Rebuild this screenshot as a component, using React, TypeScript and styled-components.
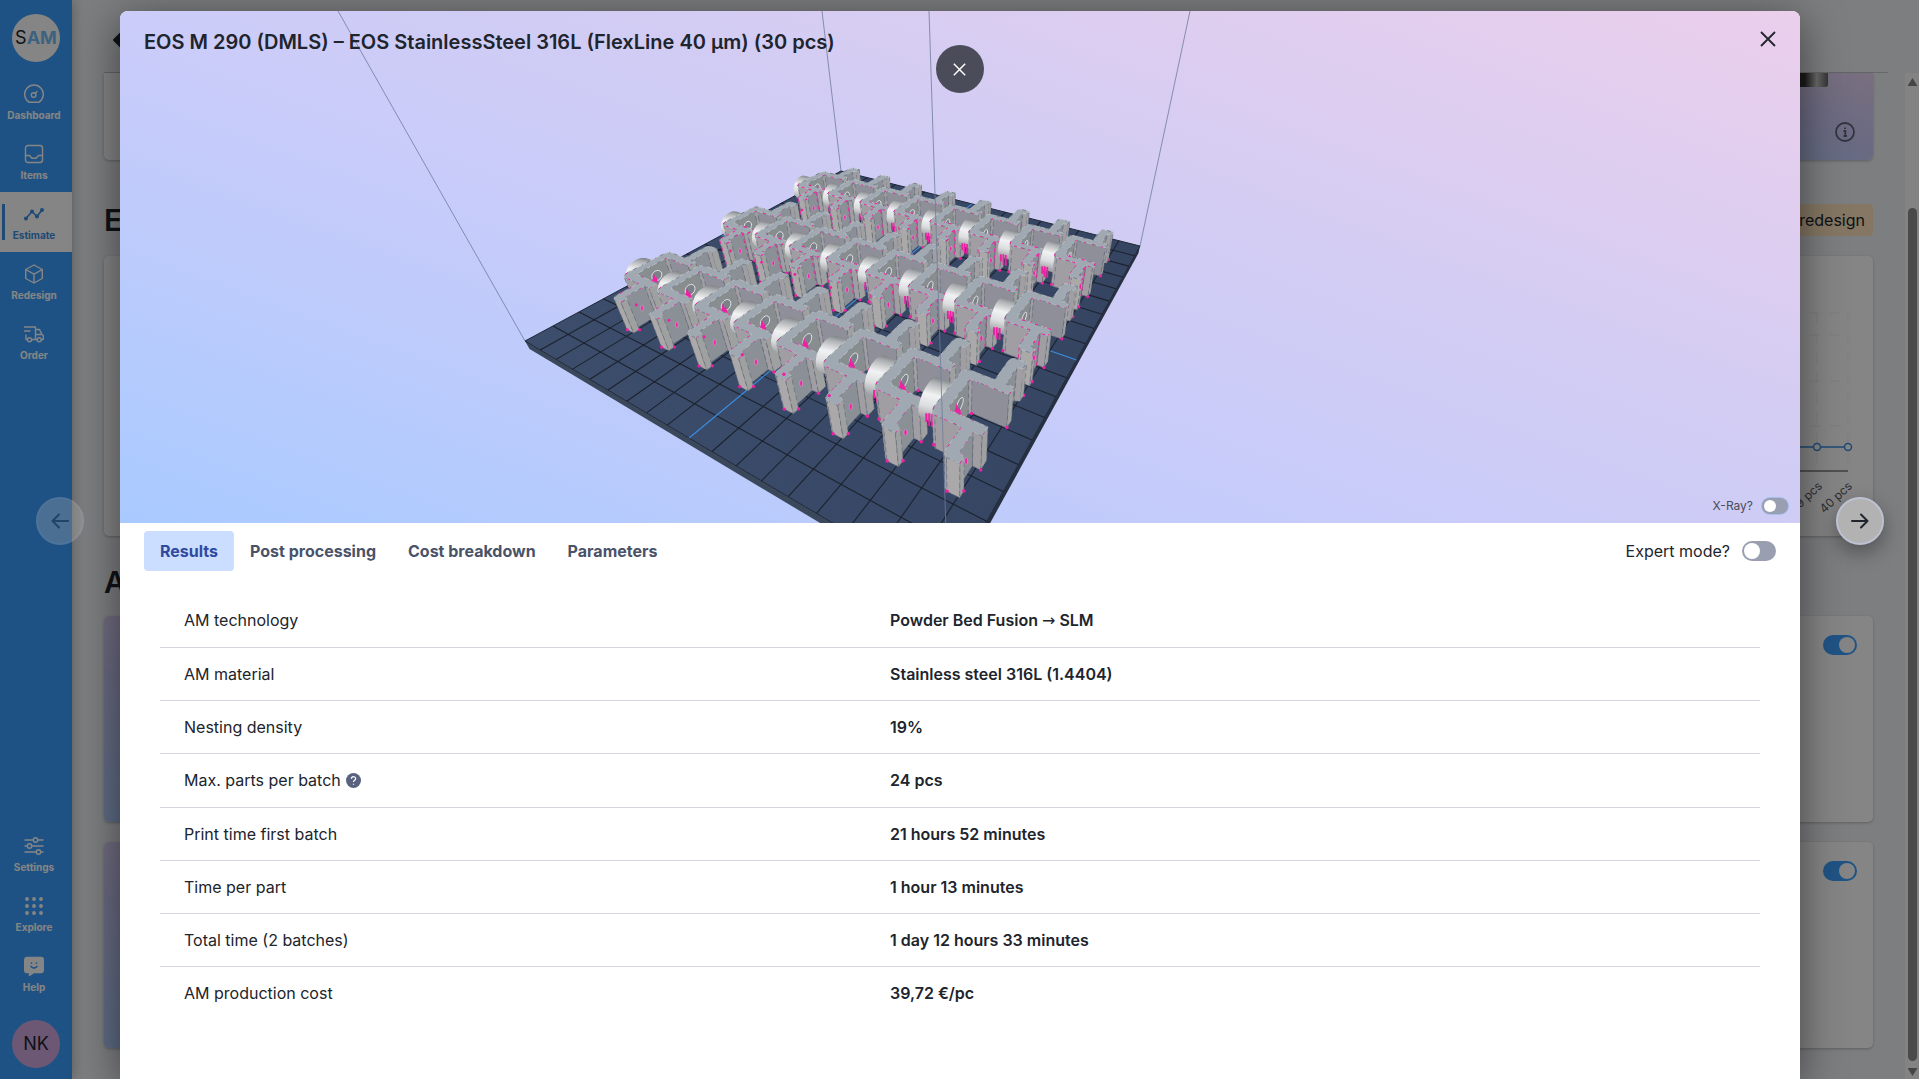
import React from "react";
import styled, { createGlobalStyle, css } from "styled-components";

type Pt = [number, number];
type Vec = [number, number, number];

const GlobalStyle = createGlobalStyle`
  *, *::before, *::after { box-sizing: border-box; }
  body {
    margin: 0;
    overflow: hidden;
    font-family: Inter, Roboto, "Liberation Sans", sans-serif;
    font-size: 16px;
    line-height: 20px;
    color: #20242c;
  }
  button { font: inherit; color: inherit; border: 0; padding: 0; background: none; cursor: pointer; }
  a { color: inherit; text-decoration: none; }
  h1, h2 { margin: 0; }
`;

/* ---------- Page behind the dialog ---------- */

const Page = styled.div`
  position: relative;
  display: flex;
  height: 100vh;
  background: #f0f2f5;
`;

const Sidebar = styled.nav`
  display: flex;
  flex-direction: column;
  width: 72px;
  padding: 14px 0 11px;
  background: #3c9efe;
  color: #fff;
  box-shadow: 0 0 12px rgba(0, 0, 0, 0.3);
`;

const Round = styled.div<{ $bg: string }>`
  display: flex;
  align-items: center;
  justify-content: center;
  width: 48px;
  height: 48px;
  margin: 0 auto;
  border-radius: 50%;
  background: ${(p) => p.$bg};
  color: #20242c;
  font-size: 18px;
`;

const LogoAccent = styled.b`
  color: #76bdf5;
`;

const NavGroup = styled.div<{ $push?: boolean }>`
  display: flex;
  flex-direction: column;
  margin-top: ${(p) => (p.$push ? "auto" : "10px")};
  margin-bottom: ${(p) => (p.$push ? "16px" : "0")};
`;

const NavItem = styled.a<{ $active?: boolean }>`
  position: relative;
  display: flex;
  flex-direction: column;
  align-items: center;
  gap: 5px;
  height: 60px;
  padding: 12px 4px 0 0;
  font-size: 10px;
  line-height: 12px;
  font-weight: 700;
  ${(p) =>
    p.$active &&
    css`
      background: #fff;
      color: #3b8ee0;
      &::before {
        content: "";
        position: absolute;
        left: 2px;
        top: 12px;
        width: 3px;
        height: 36px;
        background: #3b8ee0;
      }
    `}
`;

const Main = styled.main`
  flex: 1;
  min-width: 0;
  padding-left: 32px;
`;

const PageHeader = styled.header`
  height: 73px;
  margin-right: 31px;
  padding: 28px 0 0 6px;
  border-bottom: 1px solid #c5c8cc;
`;

const ScrollRow = styled.div`
  display: flex;
  justify-content: space-between;
  height: calc(100vh - 73px);
`;

const Column = styled.div`
  flex: 1;
  margin-right: 32px;
`;

const Card = styled.section<{ $height: number; $gap?: number; $flat?: boolean }>`
  display: flex;
  justify-content: space-between;
  align-items: flex-start;
  height: ${(p) => p.$height}px;
  margin-bottom: ${(p) => p.$gap ?? 20}px;
  border-radius: ${(p) => (p.$flat ? "0 0 5px 5px" : "5px")};
  background: #fff;
  overflow: hidden;
  box-shadow: 0 1px 3px rgba(0, 0, 0, 0.25);
`;

const Tinted = styled.div`
  display: flex;
  align-items: flex-end;
  justify-content: flex-end;
  width: 200px;
  height: 100%;
  padding: 0 17px 17px;
  background: linear-gradient(20deg, #b5d0ff, #ccccfa 55%, #e9d5f4);
`;

const CardSwitch = styled.div`
  padding: 19px 16px;
`;

const SectionBar = styled.div<{ $gap: number; $height: number }>`
  display: flex;
  align-items: center;
  justify-content: space-between;
  height: ${(p) => p.$height}px;
  margin-bottom: ${(p) => p.$gap}px;
`;

const SectionTitle = styled.h2`
  font-size: 30px;
  line-height: 36px;
  font-weight: 600;
`;

const Badge = styled.span`
  padding: 6px 8px;
  border-radius: 4px;
  background: #ffe4bf;
`;

const ScrollTrack = styled.div`
  display: flex;
  flex-direction: column;
  align-items: center;
  width: 14px;
  padding: 5px 0 3px 1px;
  background: #fcfcfc;
`;

const ScrollThumb = styled.div`
  flex: 1;
  width: 9px;
  margin: 122px 0 7px;
  border-radius: 5px;
  background: #8e8e8e;
`;

const ScrollArrow = styled.span<{ $down?: boolean }>`
  width: 10px;
  height: 8px;
  background: #858585;
  clip-path: ${(p) => (p.$down ? "polygon(0 0, 100% 0, 50% 100%)" : "polygon(50% 0, 100% 100%, 0 100%)")};
`;

const Backdrop = styled.div`
  position: absolute;
  inset: 0;
  display: flex;
  padding: 11px 119px 0 120px;
  background: rgba(0, 0, 0, 0.48);
`;

/* ---------- Dialog ---------- */

const Dialog = styled.section`
  display: flex;
  flex-direction: column;
  flex: 1;
  min-width: 0;
  border-radius: 8px 8px 0 0;
  background: #fff;
  overflow: hidden;
  box-shadow: 0 8px 44px rgba(0, 0, 0, 0.5);
`;

const Viewer = styled.div`
  position: relative;
  height: 512px;
  background: linear-gradient(20deg, #a9caff 0%, #cbccf9 45%, #d0ccf4 58%, #ebcfec 100%);
`;

const SceneSvg = styled.svg`
  display: block;
  width: 100%;
  height: 100%;
`;

const ViewerHead = styled.header`
  position: absolute;
  inset: 0 0 auto;
  display: flex;
  align-items: center;
  justify-content: space-between;
  padding: 16px 24px;
`;

const DialogTitle = styled.h1`
  font-size: 20px;
  line-height: 30px;
  font-weight: 600;
`;

const CloseButton = styled.button`
  display: flex;
  width: 16px;
  height: 30px;
  padding-bottom: 6px;
  align-items: center;
`;

const XRay = styled.label`
  position: absolute;
  right: 12px;
  bottom: 8px;
  display: flex;
  align-items: center;
  gap: 9px;
  font-size: 12px;
  line-height: 18px;
  color: #4a4d59;
`;

const Switch = styled.input<{ $small?: boolean }>`
  appearance: none;
  display: block;
  flex: none;
  width: ${(p) => (p.$small ? 26 : 34)}px;
  height: ${(p) => (p.$small ? 16 : 20)}px;
  margin: 0;
  padding: 2px;
  border-radius: 10px;
  background: #999eb1;
  box-shadow: ${(p) => (p.$small ? "0 0 0 1px #a5bfec" : "none")};
  &::before {
    content: "";
    display: block;
    width: ${(p) => (p.$small ? 12 : 16)}px;
    height: ${(p) => (p.$small ? 12 : 16)}px;
    border-radius: 50%;
    background: #fff;
  }
  &:checked { background: #3ea0ff; }
  &:checked::before { margin-left: auto; }
`;

const TabBar = styled.div`
  display: flex;
  align-items: center;
  justify-content: space-between;
  padding: 8px 24px 0;
`;

const Tabs = styled.div`
  display: flex;
`;

const Tab = styled.button<{ $active?: boolean }>`
  height: 40px;
  padding: 0 16px;
  border-radius: 4px;
  font-weight: 700;
  background: ${(p) => (p.$active ? "#cbdeff" : "transparent")};
  color: ${(p) => (p.$active ? "#3049a0" : "#4a5268")};
`;

const ExpertMode = styled.label`
  display: flex;
  align-items: center;
  gap: 12px;
`;

const TableWrap = styled.div`
  padding: 23px 40px 0;
`;

const Table = styled.table`
  width: 100%;
  border-collapse: collapse;
  table-layout: fixed;
`;

const LabelCell = styled.th`
  width: 706px;
  height: 53px;
  padding: 0 24px;
  text-align: left;
  font-weight: 400;
`;

const ValueCell = styled.td`
  padding: 0 24px;
  font-weight: 600;
`;

const ThinArrow = styled.span`
  font-family: "DejaVu Sans", sans-serif;
  font-weight: 400;
`;

const Row = styled.tr<{ $tall?: boolean }>`
  height: ${(p) => (p.$tall ? 54 : 53)}px;
  & + & { border-top: 1px solid #d4d6de; }
`;

const LabelLine = styled.span`
  display: flex;
  align-items: center;
  gap: 5px;
`;

/* ---------- Floating controls ---------- */

const FloatButton = styled.button<{ $side: "left" | "right" | "center" }>`
  position: absolute;
  display: flex;
  align-items: center;
  justify-content: center;
  width: 48px;
  height: 48px;
  border-radius: 50%;
  ${(p) =>
    p.$side === "center"
      ? css`
          top: 45px;
          left: calc(50% - 24px);
          background: #4a4d59;
          color: #fff;
        `
      : css`
          top: 497px;
          ${p.$side}: ${p.$side === "left" ? 36 : 35}px;
          background: #b2b2b2;
          border: 2px solid #bdc2d3;
          box-shadow: ${p.$side === "left" ? "none" : "0 8px 20px rgba(0, 0, 0, 0.35)"};
          opacity: ${p.$side === "left" ? 0.3 : 1};
        `}
`;

/* ---------- Build plate scene ---------- */

// Homogeneous camera columns: origin, plate u axis, plate v axis, height axis.
const O: Vec = [525, 341, 1];
const AU: Vec = [76, 33.7, -0.366];
const AV: Vec = [862.4, -58.9, 0.6497];
const AZ: Vec = [-468, -539.4, -0.489];
const CAM: Pt = [1.189, -0.312];

const project = (u: number, v: number, z: number): Pt => {
  const c = [0, 1, 2].map((i) => O[i] + AU[i] * u + AV[i] * v + AZ[i] * z);
  return [c[0] / c[2], c[1] / c[2]];
};
const fmt = (pts: Pt[]) => pts.map((p) => `${p[0].toFixed(1)},${p[1].toFixed(1)}`).join(" ");
const H = 0.08;

// Plan outline of the bracket, relative to the centre of its web.
const OUTLINE: Pt[] = [
  [0, -0.046], [0.003, -0.056], [0.01, -0.061], [0.058, -0.061], [0.058, -0.108], [0.06, -0.116], [0.066, -0.12],
  [0.088, -0.12], [0.088, -0.107], [0.078, -0.103], [0.078, -0.061], [0.093, -0.061], [0.093, -0.041], [0.026, -0.041],
  [0.021, -0.036], [0.021, 0.03], [0.025, 0.035], [0.093, 0.035], [0.093, 0.054], [0.078, 0.054], [0.078, 0.098],
  [0.088, 0.102], [0.088, 0.118], [0.066, 0.118], [0.06, 0.114], [0.058, 0.105], [0.058, 0.054], [0.01, 0.054],
  [0.003, 0.05], [0, 0.042],
];
const WEB_FACE = 14;
const BACK_FACE = 16;

const PINK = "#f01fa5";

const convexHull = (input: Pt[]): Pt[] => {
  const pts = [...input].sort((a, b) => a[0] - b[0] || a[1] - b[1]);
  const cross = (o: Pt, a: Pt, b: Pt) => (a[0] - o[0]) * (b[1] - o[1]) - (a[1] - o[1]) * (b[0] - o[0]);
  const half = (list: Pt[]) => {
    const out: Pt[] = [];
    list.forEach((p) => {
      while (out.length > 1 && cross(out[out.length - 2], out[out.length - 1], p) <= 0) out.pop();
      out.push(p);
    });
    return out.slice(0, -1);
  };
  return [...half(pts), ...half([...pts].reverse())];
};

const ring = (u: number, v: number, z: number, r: number): Pt[] =>
  Array.from({ length: 20 }, (_, i) => {
    const a = (i / 20) * Math.PI * 2;
    return project(u, v + Math.cos(a) * r, z + Math.sin(a) * r);
  });

function Bracket({ u, v }: { u: number; v: number }) {
  const front = v < 0.3;
  const plan = OUTLINE.map(([a, b]): Pt => [u + a, v + b]);
  const sides = plan
    .map((a, i) => {
      const b = plan[(i + 1) % plan.length];
      const n: Pt = [b[1] - a[1], a[0] - b[0]];
      const m: Pt = [(a[0] + b[0]) / 2, (a[1] + b[1]) / 2];
      const facing = n[0] * (CAM[0] - m[0]) + n[1] * (CAM[1] - m[1]) > 0;
      const dist = Math.hypot(CAM[0] - m[0], CAM[1] - m[1]);
      const len = Math.hypot(n[0], n[1]);
      return { i, a, b, facing, dist, len, slope: n[0] / len };
    })
    .filter((s) => s.facing)
    .sort((p, q) => q.dist - p.dist);
  const top = plan.map((p) => project(p[0], p[1], H));
  const boss = convexHull([...ring(u - 0.036, v - 0.003, 0.042, 0.036), ...ring(u, v - 0.003, 0.042, 0.036)]);
  const hole = ring(u + 0.021, v, 0.052, 0.012);
  const [hx, hy] = project(u + 0.021, v - 0.008, 0.044);
  const s = (project(u, v, 0)[1] - project(u, v, H)[1]) / 34;
  const [bx, by] = project(u - 0.031, v - 0.018, 0);
  const [fx, fy] = project(u + 0.078, v - 0.082, 0.036);
  const feet: Pt[] = [[0.066, -0.12], [0.088, -0.107], [0.093, -0.061], [0.003, -0.056], [0.026, 0.034], [0.093, 0.036], [0.088, 0.118]];
  const dots = feet.map(([a, b]) => project(u + a, v + b, 0));
  const shade = (f: { i: number; slope: number; len: number }) => {
    if (f.i === WEB_FACE) return "#888d90";
    if (f.i === BACK_FACE) return "#8f8f99";
    if (f.len > 0.035 && f.slope > 0.9) return "#8b9096";
    if (f.slope > 0.9) return "#9fa1a1";
    return f.i === 6 ? "#aba8a9" : "#a09ea3";
  };
  const dot = (i: number) => <circle cx={dots[i][0]} cy={dots[i][1]} r={1.8 * s} fill={PINK} />;
  const spike: Pt[] = [[-6, 6], [-4, 0], [-3, 1], [-1, -8], [1, -2], [2, -4], [4, 3], [2, 8]];
  const spikeScale = front ? s : s * 0.45;
  return (
    <g>
      <polygon points={fmt(boss)} fill="url(#boss)" />
      <path
        d={`M${bx - 2 * s} ${by - 8 * s}v${9 * s}M${bx + 1 * s} ${by - 8 * s}v${13 * s}M${bx + 4 * s} ${by - 7 * s}v${13 * s}`}
        stroke={PINK}
        strokeWidth={2.2 * s}
      />
      {dot(6)}
      {sides.map((f) => (
        <React.Fragment key={f.i}>
          <polygon
            points={fmt([project(f.a[0], f.a[1], 0), project(f.b[0], f.b[1], 0), project(f.b[0], f.b[1], H), project(f.a[0], f.a[1], H)])}
            fill={shade(f)}
            stroke={f.len > 0.012 ? "#5f6875" : shade(f)}
            strokeWidth={0.6}
            strokeDasharray="5 3"
          />
          {f.i === WEB_FACE && (
            <g>
              <polygon points={fmt(hole)} fill="#7c8088" stroke="#e2e4e6" strokeWidth={1} />
              <polygon points={fmt(spike.map(([x, y]): Pt => [hx + x * spikeScale, hy + y * spikeScale]))} fill={PINK} />
              {dot(4)}
              {dot(5)}
            </g>
          )}
        </React.Fragment>
      ))}
      <ellipse cx={fx} cy={fy} rx={1.6 * s} ry={3.4 * s} fill={PINK} stroke="#c9c3cb" strokeWidth={0.5} />
      <polygon points={fmt(top)} fill="#a0a8b1" stroke="#bfc4c9" strokeWidth={0.7} strokeLinejoin="round" />
      <polygon points={fmt(top)} fill="none" stroke="#5f6978" strokeWidth={0.7} strokeDasharray="4 4 1 6" />
      <polyline points={fmt(top.slice(7, 14))} fill="none" stroke={PINK} strokeWidth={front ? 0.8 : 1.1} strokeDasharray={front ? "3 9 1 12" : "3 4 1 6"} />
      <polyline points={fmt(top.slice(0, 5))} fill="none" stroke={PINK} strokeWidth={0.9} strokeDasharray={front ? "3 7" : "3 4"} />
      <polyline points={fmt(top.slice(15, 19))} fill="none" stroke={PINK} strokeWidth={0.9} strokeDasharray="2 7" />
      {!front && (
        <path
          d={`M${project(u + 0.078, v - 0.064, H).join(" ")}L${project(u + 0.078, v - 0.064, 0).join(" ")}M${project(u + 0.06, v - 0.116, H).join(" ")}L${project(u + 0.06, v - 0.116, 0.01).join(" ")}`}
          stroke={PINK}
          strokeWidth={0.9}
          strokeDasharray="4 3"
        />
      )}
      {dot(0)}
      {dot(1)}
      {dot(2)}
      {dot(3)}
    </g>
  );
}

function Scene() {
  const cells = Array.from({ length: 17 }, (_, i) => i + 1);
  const seg = (a: Pt, b: Pt) => `M${a[0].toFixed(1)} ${a[1].toFixed(1)}L${b[0].toFixed(1)} ${b[1].toFixed(1)}`;
  const T = -0.022;
  return (
    <SceneSvg viewBox="120 11 1680 512" preserveAspectRatio="xMidYMin slice" role="img" aria-label="Build plate preview">
      <defs>
        <linearGradient id="boss" x1="0.6" y1="0" x2="0.4" y2="1">
          <stop offset="0" stopColor="#75787c" />
          <stop offset="0.14" stopColor="#aeb1b4" />
          <stop offset="0.4" stopColor="#f1f2f3" />
          <stop offset="0.65" stopColor="#dcdddf" />
          <stop offset="1" stopColor="#8c9093" />
        </linearGradient>
        <linearGradient id="plate" x1="0" y1="0" x2="1" y2="0">
          <stop offset="0" stopColor="#3d4e6d" />
          <stop offset="1" stopColor="#344461" />
        </linearGradient>
      </defs>
      <path d="M338 11L525 341M822 11L841 171M1190 11L1140 246" stroke="#6f7c9d" strokeWidth="0.8" fill="none" />
      <polygon points={fmt([project(0, 0, 0), project(1, 0, 0), project(1, 0, T), project(0, 0, T)])} fill="#3b485c" />
      <polygon points={fmt([project(1, 0, 0), project(1, 1, 0), project(1, 1, T), project(1, 0, T)])} fill="#263040" />
      <polygon points={fmt([project(0, 0, 0), project(1, 0, 0), project(1, 1, 0), project(0, 1, 0)])} fill="url(#plate)" stroke="#1f2836" />
      {cells.map((i) => (
        <path
          key={i}
          d={seg(project(i / 18, 0, 0), project(i / 18, 1, 0)) + seg(project(0, i / 18, 0), project(1, i / 18, 0))}
          stroke={i === 9 ? "#3b8ee0" : "#1c222d"}
          strokeWidth={1.1}
        />
      ))}
      {[0.775, 0.51, 0.245].map((v) =>
        Array.from({ length: 8 }, (_, i) => <Bracket key={`${v}-${i}`} u={0.0825 + i * 0.111} v={v} />)
      )}
      <path d="M929 11L948 591" stroke="#6f7c9d" strokeWidth="0.8" />
    </SceneSvg>
  );
}

/* ---------- Icons ---------- */

const Icon = ({ children, size = 20 }: { children: React.ReactNode; size?: number }) => (
  <svg width={size} height={size} viewBox="0 0 20 20" fill="none" stroke="currentColor" strokeWidth="1.4" strokeLinecap="round" strokeLinejoin="round" aria-hidden="true">
    {children}
  </svg>
);

const icons: Record<string, React.ReactNode> = {
  Dashboard: (
    <Icon>
      <path d="M5 18.2A9.3 9.3 0 1 1 15 18.2Z" />
      <circle cx="9.6" cy="11" r="2.3" />
      <path d="M11.2 9.4L13 7.6" />
    </Icon>
  ),
  Items: (
    <Icon>
      <rect x="1.5" y="1.5" width="17" height="17" rx="2.5" />
      <path d="M1.5 11.5H5.5L8 14.2H12L14.5 11.5H18.5" />
    </Icon>
  ),
  Estimate: (
    <Icon>
      <path d="M2 14.5L8 7.5L13 12.5L18 6" strokeWidth="1.6" />
      <circle cx="2" cy="14.5" r="1.3" fill="currentColor" />
      <circle cx="8" cy="7.5" r="1.3" fill="currentColor" />
      <circle cx="13" cy="12.5" r="1.3" fill="currentColor" />
      <circle cx="18" cy="6" r="1.3" fill="currentColor" />
    </Icon>
  ),
  Redesign: (
    <Icon>
      <path d="M10 1L18.3 5.5V14.5L10 19L1.7 14.5V5.5ZM1.7 5.5L10 10.2L18.3 5.5M10 10.2V19" />
    </Icon>
  ),
  Order: (
    <Icon>
      <path d="M0.5 3H11.5V15.5H8M0.5 7H6M2 11V15.5H3M11.5 5.5H15.5L18 10.5H12M18 10.5L19.3 11.5V15.5H17.5M11.5 15.5H13" />
      <circle cx="5.5" cy="15.8" r="2" />
      <circle cx="15.2" cy="15.8" r="2" />
    </Icon>
  ),
  Settings: (
    <Icon>
      <path d="M1 4H9M14 4H19M1 10H3M8 10H19M1 16H12M17 16H19" />
      <circle cx="11.5" cy="4" r="2.2" />
      <circle cx="5.5" cy="10" r="2.2" />
      <circle cx="14.5" cy="16" r="2.2" />
    </Icon>
  ),
  Explore: (
    <Icon>
      {[3, 10, 17].map((x) => [3, 10, 17].map((y) => <circle key={`${x}-${y}`} cx={x} cy={y} r="1.2" fill="currentColor" />))}
    </Icon>
  ),
  Help: (
    <Icon>
      <path d="M3 1.5H17Q19.3 1.5 19.3 4V14Q19.3 16.5 17 16.5H10L5.5 19.3V16.5H3Q0.7 16.5 0.7 14V4Q0.7 1.5 3 1.5Z" fill="currentColor" />
      <path d="M7.5 7V7.2M12.5 7V7.2M7 10.5Q10 13.5 13 10.5" stroke="#3ea4ff" strokeWidth="1.7" />
    </Icon>
  ),
};

const Cross = ({ size }: { size: number }) => (
  <svg width={size} height={size} viewBox="0 0 16 16" fill="none" stroke="currentColor" strokeWidth="1.8" aria-hidden="true">
    <path d="M1 1L15 15M15 1L1 15" />
  </svg>
);

const Arrow = ({ flip }: { flip?: boolean }) => (
  <svg width="18" height="18" viewBox="0 0 18 18" fill="none" stroke="#20242c" strokeWidth="2" strokeLinecap="round" strokeLinejoin="round" aria-hidden="true">
    <path d={flip ? "M17 9H1.5M8 2.5L1.5 9L8 15.5" : "M1 9H16.5M10 2.5L16.5 9L10 15.5"} />
  </svg>
);

const ChartSvg = styled.svg`
  margin-left: auto;
  font-size: 12px;
`;

const MetalPart = styled.svg`
  align-self: flex-start;
`;

const InfoIcon = () => (
  <svg width="22" height="22" viewBox="0 0 22 22" fill="none" stroke="#5d6478" strokeWidth="1.8" aria-hidden="true">
    <circle cx="11" cy="11" r="9" />
    <path d="M9.5 10H11.3V15M9.5 15H13M11 6.5V8" />
  </svg>
);

const nav = (names: string[]) =>
  names.map((n) => (
    <NavItem key={n} href="#" $active={n === "Estimate"}>
      {icons[n]}
      {n}
    </NavItem>
  ));

const results: [string, React.ReactNode][] = [
  ["AM technology", <>Powder Bed Fusion <ThinArrow>→</ThinArrow> SLM</>],
  ["AM material", "Stainless steel 316L (1.4404)"],
  ["Nesting density", "19%"],
  ["Max. parts per batch", "24 pcs"],
  ["Print time first batch", "21 hours 52 minutes"],
  ["Time per part", "1 hour 13 minutes"],
  ["Total time (2 batches)", "1 day 12 hours 33 minutes"],
  ["AM production cost", "39,72 €/pc"],
];

export default function App() {
  return (
    <Page>
      <GlobalStyle />
      <Sidebar>
        <Round $bg="#fff">
          <span>
            S<LogoAccent>AM</LogoAccent>
          </span>
        </Round>
        <NavGroup>{nav(["Dashboard", "Items", "Estimate", "Redesign", "Order"])}</NavGroup>
        <NavGroup $push>{nav(["Settings", "Explore", "Help"])}</NavGroup>
        <Round $bg="#cfa9de">NK</Round>
      </Sidebar>

      <Main>
        <PageHeader>
          <svg width="26" height="24" viewBox="0 0 26 24" aria-hidden="true">
            <path d="M4 12L11 5V9H24V15H11V19Z" fill="#20242c" stroke="#20242c" strokeWidth="2" strokeLinejoin="round" />
          </svg>
        </PageHeader>
        <ScrollRow>
          <Column>
            <Card $height={87} $gap={44} $flat>
              <span />
              <Tinted>
                <MetalPart width="100" height="16" viewBox="0 0 100 16" aria-hidden="true">
                  <defs>
                    <linearGradient id="metal">
                      <stop offset="0" stopColor="#333" />
                      <stop offset="0.75" stopColor="#333" />
                      <stop offset="0.88" stopColor="#ccc" />
                      <stop offset="1" stopColor="#666" />
                    </linearGradient>
                  </defs>
                  <path d="M0 0H94V12Q94 14 90 14H0Z" fill="url(#metal)" />
                </MetalPart>
                <InfoIcon />
              </Tinted>
            </Card>
            <SectionBar $height={32} $gap={20}>
              <SectionTitle>Estimate</SectionTitle>
              <Badge>Start redesign</Badge>
            </SectionBar>
            <Card $height={280} $gap={28}>
              <ChartSvg width="240" height="280" viewBox="1633 256 240 280">
                <path d="M1650 313H1848M1650 335H1848M1650 381H1848M1650 426H1848M1817 313V463M1848 313V463" stroke="#efefef" strokeDasharray="10 10" />
                <path d="M1650 471H1848" stroke="#999" strokeWidth="2" />
                <path d="M1650 447H1848" stroke="#3b8ee0" strokeWidth="1.5" />
                <circle cx="1817" cy="447" r="3.5" fill="#fff" stroke="#3b8ee0" strokeWidth="1.5" />
                <circle cx="1848" cy="447" r="3.5" fill="#fff" stroke="#3b8ee0" strokeWidth="1.5" />
                <text textAnchor="end" fill="#555a66" transform="translate(1823 487) rotate(-43)">39 pcs</text>
                <text textAnchor="end" fill="#555a66" transform="translate(1853 487) rotate(-43)">40 pcs</text>
              </ChartSvg>
            </Card>
            <SectionBar $height={36} $gap={16}>
              <SectionTitle>Alternatives</SectionTitle>
            </SectionBar>
            {["First alternative", "Second alternative"].map((name) => (
              <Card key={name} $height={206}>
                <Tinted />
                <CardSwitch>
                  <Switch type="checkbox" defaultChecked aria-label={name} />
                </CardSwitch>
              </Card>
            ))}
          </Column>
          <ScrollTrack>
            <ScrollArrow />
            <ScrollThumb />
            <ScrollArrow $down />
          </ScrollTrack>
        </ScrollRow>
      </Main>

      <Backdrop>
        <Dialog role="dialog" aria-labelledby="dialog-title">
          <Viewer>
            <Scene />
            <ViewerHead>
              <DialogTitle id="dialog-title">EOS M 290 (DMLS) – EOS StainlessSteel 316L (FlexLine 40 µm) (30 pcs)</DialogTitle>
              <CloseButton aria-label="Close dialog">
                <Cross size={16} />
              </CloseButton>
            </ViewerHead>
            <XRay>
              X-Ray?
              <Switch type="checkbox" $small />
            </XRay>
          </Viewer>
          <TabBar>
            <Tabs role="tablist">
              {["Results", "Post processing", "Cost breakdown", "Parameters"].map((t, i) => (
                <Tab key={t} role="tab" aria-selected={i === 0} $active={i === 0}>
                  {t}
                </Tab>
              ))}
            </Tabs>
            <ExpertMode>
              Expert mode?
              <Switch type="checkbox" />
            </ExpertMode>
          </TabBar>
          <TableWrap>
            <Table>
              <tbody>
                {results.map(([label, value]) => (
                  <Row key={label} $tall={label.startsWith("Max.")}>
                    <LabelCell scope="row">
                      <LabelLine>
                        {label}
                        {label.startsWith("Max.") && (
                          <svg width="15" height="15" viewBox="0 0 15 15" role="img" aria-label="More information">
                            <circle cx="7.5" cy="7.5" r="7.5" fill="#596380" />
                            <path d="M5.3 5.8Q5.5 3.6 7.5 3.6T9.7 5.6Q9.7 6.8 8.4 7.4Q7.5 7.9 7.5 9M7.5 10.7V11.7" fill="none" stroke="#fff" strokeWidth="1.2" />
                          </svg>
                        )}
                      </LabelLine>
                    </LabelCell>
                    <ValueCell>{value}</ValueCell>
                  </Row>
                ))}
              </tbody>
            </Table>
          </TableWrap>
        </Dialog>
      </Backdrop>

      <FloatButton $side="left" aria-label="Previous">
        <Arrow flip />
      </FloatButton>
      <FloatButton $side="center" aria-label="Close preview">
        <Cross size={13} />
      </FloatButton>
      <FloatButton $side="right" aria-label="Next">
        <Arrow />
      </FloatButton>
    </Page>
  );
}
